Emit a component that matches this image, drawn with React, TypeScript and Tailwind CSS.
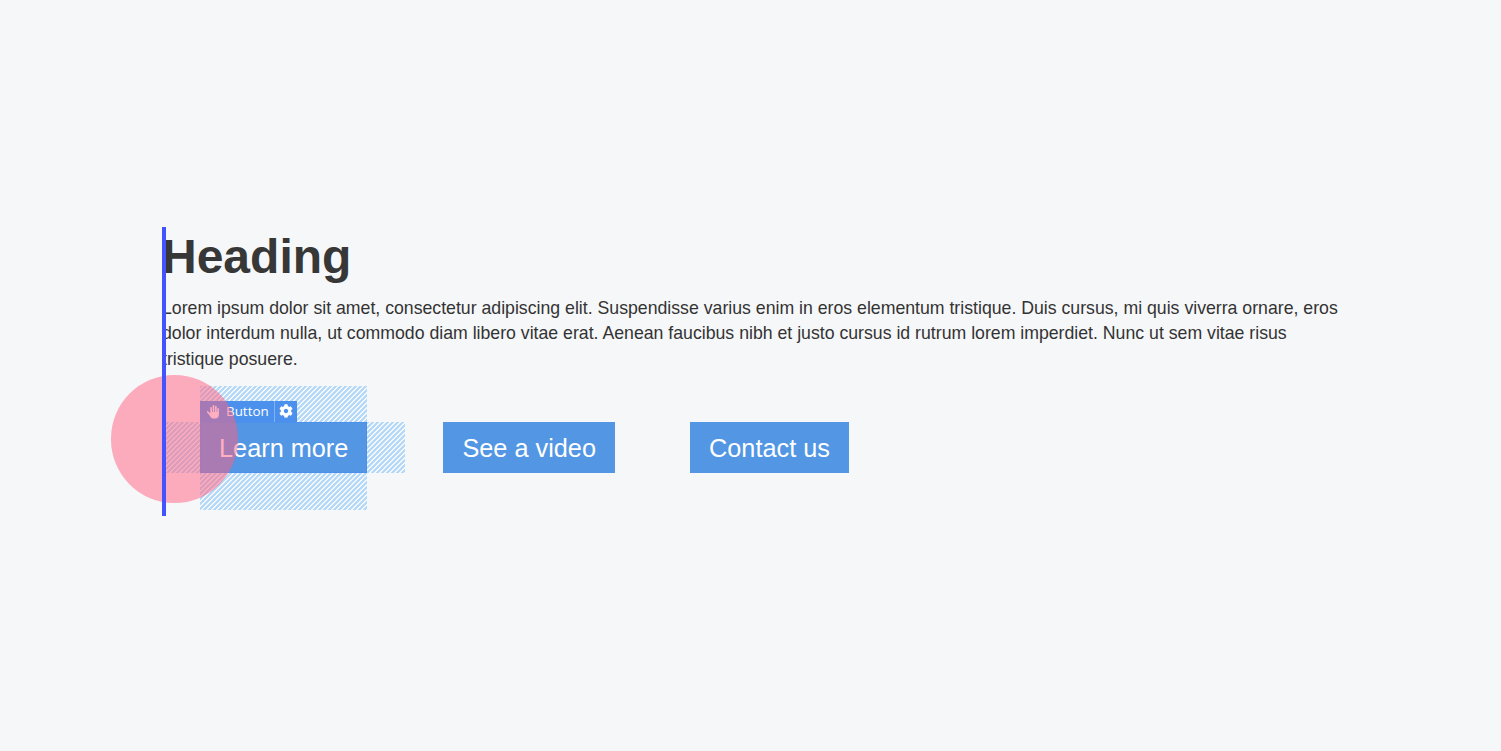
import { FaCog } from "react-icons/fa";

const HATCH =
  "absolute bg-[repeating-linear-gradient(135deg,#b5daf9_0px,#b5daf9_1.768px,#f6f7f9_1.768px,#f6f7f9_3.5355px)]";

const BTN =
  "block h-[51px] px-[19px] bg-[#5296e4] text-white text-[25.3px] leading-[52px] whitespace-nowrap";

function HandIcon() {
  return (
    <svg viewBox="0 0 14 14" className="h-[15px] w-[15px]" fill="none" stroke="currentColor" strokeLinecap="round">
      <g strokeWidth="1.5">
        <path d="M4.8 3.6V8" />
        <path d="M7 1.6V8" />
        <path d="M9.2 2.4V8" />
        <path d="M11.3 4.4V8.5" />
        <path d="M1.6 7.4L4.4 10.6" />
      </g>
      <path d="M4 7.5H12V10C12 12.2 10.6 13.6 8.6 13.6H7C5.6 13.6 4.8 12.8 4 11.6Z" fill="currentColor" stroke="none" />
    </svg>
  );
}

export default function App() {
  return (
    <div className="relative min-h-screen overflow-hidden bg-[#f6f7f9] text-[#333333] font-['Liberation_Sans',Arial,sans-serif]">
      <div className="pt-[227px] pl-[162px] pr-[155px]">
        <div className="relative pb-[6px]">
          <h1 className="h-[58px] mb-[11px] text-[48px] font-bold leading-[60px] text-[#373737]">Heading</h1>
          <p className="text-[17.69px] leading-[25.3px]">
            Lorem ipsum dolor sit amet, consectetur adipiscing elit. Suspendisse varius enim in eros
            elementum tristique. Duis cursus, mi quis viverra ornare, eros dolor interdum nulla, ut
            commodo diam libero vitae erat. Aenean faucibus nibh et justo cursus id rutrum lorem
            imperdiet. Nunc ut sem vitae risus tristique posuere.
          </p>
          <div className="mt-[14px] flex items-start">
            {/* selected button with margin guides */}
            <div className="relative mx-[38px] my-[36px]">
              <div className={`${HATCH} left-0 right-0 top-[-36px] h-[36px]`} />
              <div className={`${HATCH} left-0 right-0 bottom-[-37px] h-[37px]`} />
              <div className={`${HATCH} left-[-38px] top-0 bottom-0 w-[38px]`} />
              <div className={`${HATCH} right-[-38px] top-0 bottom-0 w-[38px]`} />
              <a className={`${BTN} relative ring-1 ring-inset ring-[#4a90ec]`}>Learn more</a>
              <div className="absolute left-0 top-[-21px] flex h-[21px] items-stretch bg-[#4a90ec] text-white text-[13.4px] font-['Open_Sans',sans-serif]">
                <div className="flex items-center gap-[5px] pl-[6px] pr-[5px] border-r border-[#7fb2f2]">
                  <HandIcon />
                  <span className="leading-none">Button</span>
                </div>
                <div className="flex w-[22px] items-center justify-center">
                  <FaCog className="h-[14px] w-[14px]" />
                </div>
              </div>
            </div>
            <a className={`${BTN} mt-[36px] ml-[38px]`}>See a video</a>
            <a className={`${BTN} mt-[36px] ml-[75px]`}>Contact us</a>
          </div>
        </div>
      </div>
      {/* pink cursor highlight and insertion line */}
      <div className="absolute left-[111px] top-[375px] h-[128px] w-[127px] rounded-full bg-[#ff5f80]/50" />
      <div className="absolute left-[162px] top-[227px] h-[289px] w-[4px] bg-[#4353ff]" />
    </div>
  );
}
